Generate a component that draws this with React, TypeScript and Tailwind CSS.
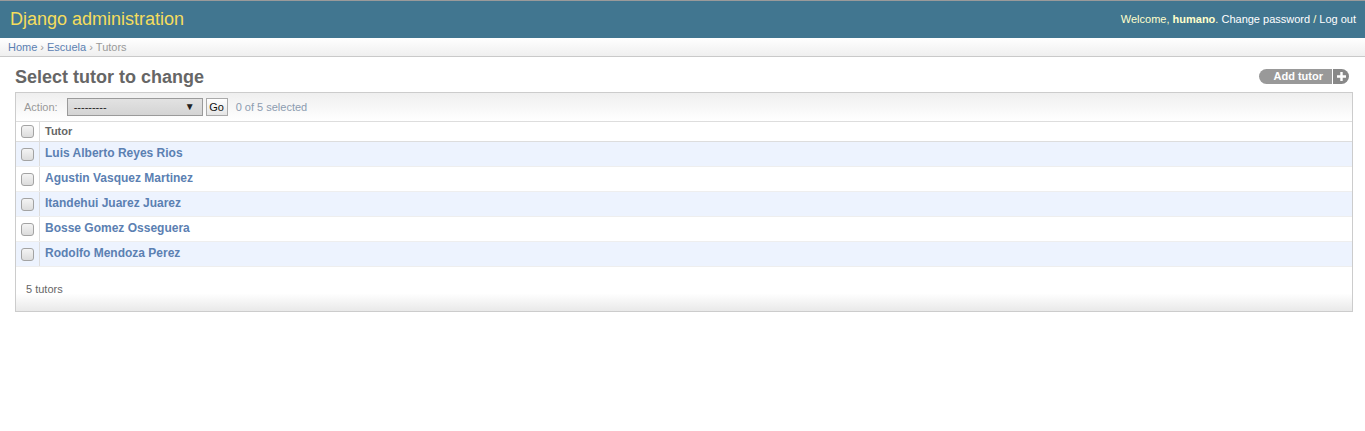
import React from "react";

const rows = [
  "Luis Alberto Reyes Rios",
  "Agustin Vasquez Martinez",
  "Itandehui Juarez Juarez",
  "Bosse Gomez Osseguera",
  "Rodolfo Mendoza Perez",
];

function Check() {
  return (
    <span className="block w-[13px] h-[13px] rounded-[3px] border border-[#a3a3a3] bg-gradient-to-b from-[#f4f4f4] to-[#dcdcdc]" />
  );
}

export default function App() {
  return (
    <div className="min-h-[431px] bg-white text-[#333] font-['Liberation_Sans',Arial,sans-serif] text-[12px]">
      {/* Header */}
      <div className="border-t border-[#9a9a9a] bg-[#417690] h-[38px] flex items-center justify-between pl-[10px] pr-[9px]">
        <h1 className="text-[18px] text-[#f5dd5d] font-normal leading-none pb-[1px]">Django administration</h1>
        <div className="text-[11px] text-[#ffffcc] leading-none">
          Welcome, <strong className="font-bold">humano</strong>.{" "}
          <span className="text-white">Change password</span> / <span className="text-white">Log out</span>
        </div>
      </div>
      {/* Breadcrumbs */}
      <div className="h-[19px] bg-gradient-to-b from-white to-[#efefef] border-b border-[#c9c9c9] px-[8px] flex items-center text-[11px] text-[#999] leading-none">
        <span className="text-[#5b80b2]">Home</span>
        <span className="mx-[3px]">›</span>
        <span className="text-[#5b80b2]">Escuela</span>
        <span className="mx-[3px]">›</span>
        <span>Tutors</span>
      </div>
      {/* Content */}
      <div className="pl-[15px] pr-[12px] pt-[9px]">
        <div className="flex items-end justify-between h-[26px]">
          <h2 className="text-[18px] font-bold text-[#666] leading-none pb-[6px]">Select tutor to change</h2>
          <div className="flex h-[15px] mb-[8px] mr-[4px] text-[11px] font-bold text-white leading-none">
            <span className="bg-[#999] rounded-l-full pl-[15px] pr-[9px] flex items-center">Add tutor</span>
            <span className="w-[1px] bg-white" />
            <span className="bg-[#888] rounded-r-full w-[16px] flex items-center justify-center">
              <svg width="11" height="11" viewBox="0 0 11 11">
                <path d="M5.5 1v9M1 5.5h9" stroke="white" strokeWidth="2.4" />
              </svg>
            </span>
          </div>
        </div>
        <div className="border border-[#ccc]">
          {/* Actions */}
          <div className="h-[29px] border-b border-[#ddd] bg-gradient-to-b from-[#efefef] to-white flex items-center pl-[8px] text-[11px] leading-none">
            <span className="text-[#999]">Action:</span>
            <div className="ml-[9px] w-[136px] h-[18px] border border-[#9a9a9a] bg-gradient-to-b from-[#e2e2e2] to-[#d4d4d4] flex items-center justify-between pl-[6px] pr-[7px] text-[#222]">
              <span className="text-[11px]">---------</span>
              <span className="text-[10px]">▼</span>
            </div>
            <div className="ml-[3px] w-[22px] h-[18px] border border-[#aaa] bg-gradient-to-b from-white to-[#e5e5e5] flex items-center justify-center text-[#111] text-[11px]">Go</div>
            <span className="ml-[8px] text-[#8c9cb0]">0 of 5 selected</span>
          </div>
          {/* Table header */}
          <div className="flex h-[20px] border-b border-[#ddd] bg-white">
            <div className="w-[24px] border-r border-[#ddd] flex items-center pl-[5px]">
              <Check />
            </div>
            <div className="flex items-center pl-[5px] text-[11px] font-bold text-[#666]">Tutor</div>
          </div>
          {rows.map((r, i) => (
            <div
              key={r}
              className={`flex h-[25px] border-b border-[#eee] ${i % 2 === 0 ? "bg-[#edf3fe]" : "bg-white"}`}
            >
              <div className="w-[24px] border-r border-[#ddd] flex items-center pl-[5px]">
                <Check />
              </div>
              <div className="flex items-center pl-[5px] pb-[2px] text-[12px] font-bold text-[#5b80b2]">{r}</div>
            </div>
          ))}
          {/* Paginator */}
          <div className="h-[44px] bg-gradient-to-b from-white from-60% to-[#e9e9e9] flex items-center pl-[10px] text-[11px] text-[#666]">
            5 tutors
          </div>
        </div>
      </div>
    </div>
  );
}
